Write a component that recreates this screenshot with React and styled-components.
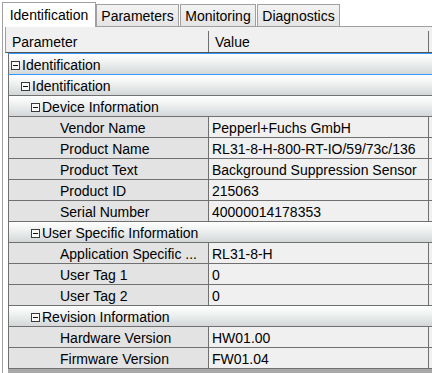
import React from 'react';
import styled, { createGlobalStyle, css } from 'styled-components';

const GlobalStyle = createGlobalStyle`
  html, body { margin: 0; padding: 0; background: #fff; }
  body {
    font-family: "Liberation Sans", Arial, sans-serif;
    font-size: 14px;
    color: #000;
  }
  * { box-sizing: border-box; }
`;

const Window = styled.div`
  width: 432px;
  height: 373px;
  overflow: hidden;
  background: #fff;
  display: flex;
  flex-direction: column;
`;

const TabStrip = styled.div`
  flex: none;
  display: flex;
  align-items: flex-end;
  height: 26px;
  padding-left: 2px;
`;

const Tab = styled.div`
  flex: none;
  width: ${p => p.$w}px;
  margin-left: ${p => p.$gap || 0}px;
  border: 1px solid #a0a0a0;
  border-bottom: none;
  line-height: 16px;
  text-align: center;
  white-space: nowrap;
  ${p => p.$active ? css`
    height: 25px;
    margin-bottom: -1px;
    padding-top: 4px;
    background: #fff;
    position: relative;
    z-index: 1;
  ` : css`
    height: 22px;
    padding-top: 3px;
    background: linear-gradient(#f3f3f3, #e4e4e4);
  `}
`;

const Panel = styled.div`
  flex: 1;
  min-height: 0;
  display: flex;
  flex-direction: column;
  margin-left: 2px;
  padding-left: 2px;
  border-top: 1px solid #a0a0a0;
  border-left: 1px solid #a0a0a0;
`;

const Header = styled.div`
  flex: none;
  display: flex;
  align-items: flex-start;
  height: 26px;
  background: #f0f0f0;
  border-left: 1px solid #a0a0a0;
  border-bottom: 1px solid #555;
`;

const HeaderCell = styled.div`
  flex: none;
  width: ${p => p.$w}px;
  height: 21px;
  margin-top: 4px;
  padding: 1px 0 0 6px;
  line-height: 20px;
  border-right: 1px solid #707070;
  white-space: nowrap;
`;

const Body = styled.div`
  flex: 1;
  min-height: 0;
  display: flex;
  flex-direction: column;
  padding-left: 3px;
`;

const RowsArea = styled.div`
  flex: 1;
  background: #a9a9a9;
  border-top: 1px solid #3399ff;
`;

const GroupRow = styled.div`
  display: flex;
  align-items: center;
  height: 21px;
  padding: 2px 0 0 ${p => 2 + p.$level * 10}px;
  line-height: 18px;
  border-left: 1px solid #707070;
  border-bottom: 1px solid ${p => (p.$selected ? '#3399ff' : '#707070')};
  background: linear-gradient(#ffffff 0%, #eef0f0 45%, #d3d7d7 100%);
  white-space: nowrap;
`;

const GroupLabel = styled.span`
  margin-left: 2px;
`;

const LeafRow = styled.div`
  display: flex;
  height: 21px;
  border-left: 1px solid #707070;
  border-bottom: 1px solid #707070;
  background: #f0f0f0;
`;

const Cell = styled.div`
  flex: none;
  width: ${p => p.$w}px;
  padding: 2px 0 0 ${p => p.$pad}px;
  line-height: 18px;
  background: ${p => p.$bg};
  border-right: 1px solid #707070;
  white-space: nowrap;
  overflow: hidden;
`;

const Collapse = () => (
  <svg width="9" height="9" viewBox="0 0 9 9" style={{ flex: 'none' }}>
    <rect x="0.5" y="0.5" width="8" height="8" fill="#fafafa" stroke="#3a3a3a" />
    <path d="M2 4.5h5" stroke="#111" />
  </svg>
);

const rows = [
  { type: 'g', level: 0, label: 'Identification', selected: true },
  { type: 'g', level: 1, label: 'Identification' },
  { type: 'g', level: 2, label: 'Device Information' },
  { type: 'l', name: 'Vendor Name', value: 'Pepperl+Fuchs GmbH' },
  { type: 'l', name: 'Product Name', value: 'RL31-8-H-800-RT-IO/59/73c/136' },
  { type: 'l', name: 'Product Text', value: 'Background Suppression Sensor' },
  { type: 'l', name: 'Product ID', value: '215063' },
  { type: 'l', name: 'Serial Number', value: '40000014178353' },
  { type: 'g', level: 2, label: 'User Specific Information' },
  { type: 'l', name: 'Application Specific ...', value: 'RL31-8-H' },
  { type: 'l', name: 'User Tag 1', value: '0' },
  { type: 'l', name: 'User Tag 2', value: '0' },
  { type: 'g', level: 2, label: 'Revision Information' },
  { type: 'l', name: 'Hardware Version', value: 'HW01.00' },
  { type: 'l', name: 'Firmware Version', value: 'FW01.04' },
];

export default function App() {
  return (
    <>
      <GlobalStyle />
      <Window>
        <TabStrip>
          <Tab $active $w={94}>Identification</Tab>
          <Tab $w={83}>Parameters</Tab>
          <Tab $w={76} $gap={1}>Monitoring</Tab>
          <Tab $w={83} $gap={1}>Diagnostics</Tab>
        </TabStrip>
        <Panel>
          <Header>
            <HeaderCell $w={203}>Parameter</HeaderCell>
            <HeaderCell $w={220}>Value</HeaderCell>
          </Header>
          <Body>
            <RowsArea>
              {rows.map((r, i) =>
                r.type === 'g' ? (
                  <GroupRow key={i} $level={r.level} $selected={r.selected}>
                    <Collapse />
                    <GroupLabel>{r.label}</GroupLabel>
                  </GroupRow>
                ) : (
                  <LeafRow key={i}>
                    <Cell $w={200} $pad={51} $bg="#e3e3e3">{r.name}</Cell>
                    <Cell $w={220} $pad={3} $bg="#f0f0f0">{r.value}</Cell>
                  </LeafRow>
                )
              )}
            </RowsArea>
          </Body>
        </Panel>
      </Window>
    </>
  );
}
